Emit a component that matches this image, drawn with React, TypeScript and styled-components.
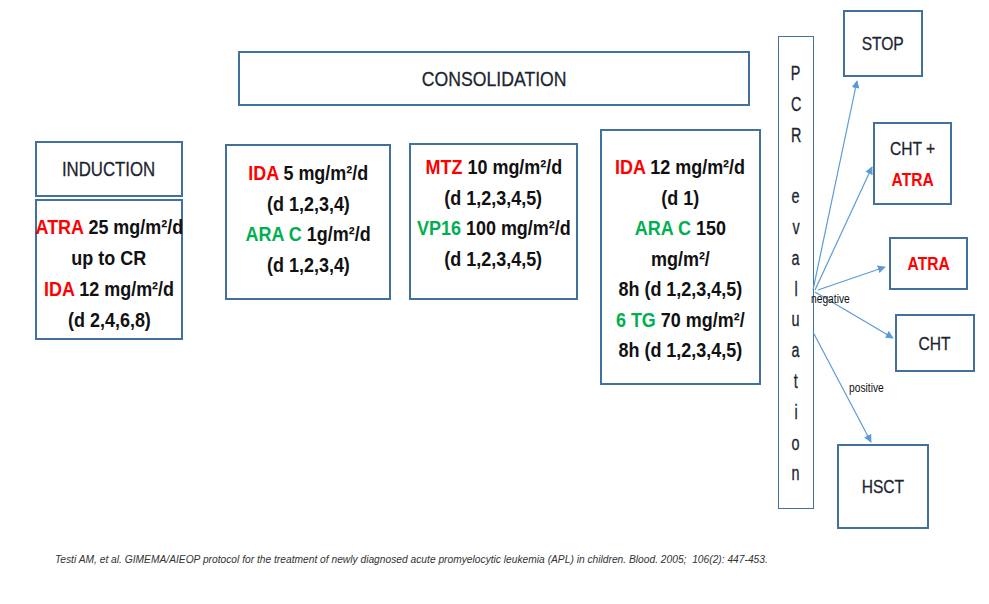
import React from "react";
import styled, { createGlobalStyle, css } from "styled-components";

const FONT = `"Liberation Sans", Arial, sans-serif`;

const GlobalStyle = createGlobalStyle`
  html, body { margin: 0; padding: 0; background: #ffffff; }
  body { font-family: ${FONT}; color: #000; }
  * { box-sizing: border-box; }
`;

/* Calibri-like narrow proportions: Arial metrics compressed horizontally */
const narrow = (k = 0.82) => css`
  transform: scaleX(${k});
  transform-origin: center center;
`;

const Page = styled.div`
  width: 989px;
  height: 604px;
  background: #fff;
  overflow: hidden;
`;

const Canvas = styled.div`
  position: relative;
  width: 989px;
  height: 552px;
`;

type BoxProps = { $x: number; $y: number; $w: number; $h: number; $pt?: number };

const Node = styled.div<BoxProps>`
  position: absolute;
  left: ${(p) => p.$x}px;
  top: ${(p) => p.$y}px;
  width: ${(p) => p.$w}px;
  height: ${(p) => p.$h}px;
  border: 2px solid #41719c;
  background: #fff;
  display: flex;
  flex-direction: column;
  align-items: center;
  justify-content: ${(p) => (p.$pt === undefined ? "center" : "flex-start")};
  padding-top: ${(p) => p.$pt ?? 0}px;
`;

const Title = styled.div<{ $size?: number }>`
  font-size: ${(p) => p.$size ?? 21}px;
  color: #1c2530;
  font-weight: 400;
  white-space: nowrap;
  line-height: 1.2;
  -webkit-text-stroke: 0.3px #1c2530;
  ${narrow(0.84)}
`;

const Line = styled.div<{ $lh?: number }>`
  font-size: 21px;
  font-weight: 700;
  line-height: ${(p) => p.$lh ?? 30.5}px;
  color: #111;
  white-space: nowrap;
  ${narrow(0.855)}
`;

const Drug = styled.span<{ $c: "red" | "green" }>`
  color: ${(p) => (p.$c === "red" ? "#ff0000" : "#00b050")};
  font-weight: 700;
`;

const Outcome = styled.div<{ $red?: boolean }>`
  font-size: 19px;
  line-height: 31px;
  white-space: nowrap;
  color: ${(p) => (p.$red ? "#ff0000" : "#1c2530")};
  font-weight: ${(p) => (p.$red ? 700 : 400)};
  -webkit-text-stroke: ${(p) => (p.$red ? "0" : "0.3px #1c2530")};
  ${narrow()}
`;

const Column = styled.div`
  position: absolute;
  left: 778px;
  top: 36px;
  width: 36px;
  height: 473px;
  border: 1.5px solid #41719c;
  display: flex;
  flex-direction: column;
  align-items: center;
  padding-top: 21px;
`;

const Letter = styled.span`
  display: block;
  height: 30.8px;
  line-height: 30.8px;
  font-size: 20px;
  color: #1c2530;
  text-align: center;
  -webkit-text-stroke: 0.3px #1c2530;
  ${narrow(0.72)}
`;

const Label = styled.span<{ $x: number; $y: number }>`
  position: absolute;
  left: ${(p) => p.$x}px;
  top: ${(p) => p.$y}px;
  font-size: 12.5px;
  line-height: 14px;
  color: #111;
  white-space: nowrap;
  transform: scaleX(0.82);
  transform-origin: left center;
`;

const Arrows = styled.svg`
  position: absolute;
  left: 0;
  top: 0;
  width: 989px;
  height: 552px;
  pointer-events: none;
`;

const Citation = styled.div`
  padding-left: 55px;
  font-size: 11.5px;
  line-height: 14px;
  font-style: italic;
  color: #333;
  white-space: nowrap;
  transform: scaleX(0.89);
  transform-origin: 55px center;
`;

const arrows: [number, number, number, number][] = [
  [813, 290, 857, 81],
  [815, 290, 872, 167],
  [818, 290, 885, 267],
  [815, 292, 893, 338],
  [813, 332, 871, 442],
];

const pcr = "PCR evaluation".split("");

export default function App() {
  return (
    <Page>
      <GlobalStyle />
      <Canvas>
        <Node $x={238} $y={51} $w={512} $h={55}>
          <Title>CONSOLIDATION</Title>
        </Node>

        <Node $x={35} $y={141} $w={148} $h={56}>
          <Title $size={20}>INDUCTION</Title>
        </Node>
        <Node $x={35} $y={199} $w={148} $h={141} $pt={10}>
          <Line $lh={31}>
            <Drug $c="red">ATRA</Drug> 25 mg/m²/d
          </Line>
          <Line $lh={31}>up to CR</Line>
          <Line $lh={31}>
            <Drug $c="red">IDA</Drug> 12 mg/m²/d
          </Line>
          <Line $lh={31}>(d 2,4,6,8)</Line>
        </Node>

        <Node $x={225} $y={144} $w={166} $h={156} $pt={12}>
          <Line>
            <Drug $c="red">IDA</Drug> 5 mg/m²/d
          </Line>
          <Line>(d 1,2,3,4)</Line>
          <Line>
            <Drug $c="green">ARA C</Drug> 1g/m²/d
          </Line>
          <Line>(d 1,2,3,4)</Line>
        </Node>

        <Node $x={409} $y={143} $w={169} $h={157} $pt={7}>
          <Line>
            <Drug $c="red">MTZ</Drug> 10 mg/m²/d
          </Line>
          <Line>(d 1,2,3,4,5)</Line>
          <Line>
            <Drug $c="green">VP16</Drug> 100 mg/m²/d
          </Line>
          <Line>(d 1,2,3,4,5)</Line>
        </Node>

        <Node $x={600} $y={129} $w={161} $h={256} $pt={21}>
          <Line>
            <Drug $c="red">IDA</Drug> 12 mg/m²/d
          </Line>
          <Line>(d 1)</Line>
          <Line>
            <Drug $c="green">ARA C</Drug> 150
          </Line>
          <Line>mg/m²/</Line>
          <Line>8h (d 1,2,3,4,5)</Line>
          <Line>
            <Drug $c="green">6 TG</Drug> 70 mg/m²/
          </Line>
          <Line>8h (d 1,2,3,4,5)</Line>
        </Node>

        <Column>
          {pcr.map((ch, i) => (
            <Letter key={i}>{ch === " " ? "\u00a0" : ch}</Letter>
          ))}
        </Column>

        <Arrows viewBox="0 0 989 552">
          <defs>
            <marker
              id="head"
              viewBox="0 0 10 10"
              refX="9"
              refY="5"
              markerWidth="8"
              markerHeight="8"
              orient="auto"
              markerUnits="userSpaceOnUse"
            >
              <path d="M0 0 L10 5 L0 10 Z" fill="#5b9bd5" />
            </marker>
          </defs>
          {arrows.map(([x1, y1, x2, y2], i) => (
            <line
              key={i}
              x1={x1}
              y1={y1}
              x2={x2}
              y2={y2}
              stroke="#5b9bd5"
              strokeWidth={1.2}
              markerEnd="url(#head)"
            />
          ))}
        </Arrows>

        <Node $x={843} $y={10} $w={80} $h={67}>
          <Outcome>STOP</Outcome>
        </Node>
        <Node $x={873} $y={122} $w={79} $h={83}>
          <Outcome>CHT +</Outcome>
          <Outcome $red>ATRA</Outcome>
        </Node>
        <Node $x={889} $y={237} $w={79} $h={53}>
          <Outcome $red>ATRA</Outcome>
        </Node>
        <Node $x={895} $y={314} $w={80} $h={58}>
          <Outcome>CHT</Outcome>
        </Node>
        <Node $x={837} $y={444} $w={92} $h={85}>
          <Outcome>HSCT</Outcome>
        </Node>

        <Label $x={811} $y={292}>negative</Label>
        <Label $x={849} $y={381}>positive</Label>
      </Canvas>
      <Citation>
        Testi AM, et al. GIMEMA/AIEOP protocol for the treatment of newly diagnosed acute
        promyelocytic leukemia (APL) in children. Blood. 2005;&nbsp; 106(2): 447-453.
      </Citation>
    </Page>
  );
}
